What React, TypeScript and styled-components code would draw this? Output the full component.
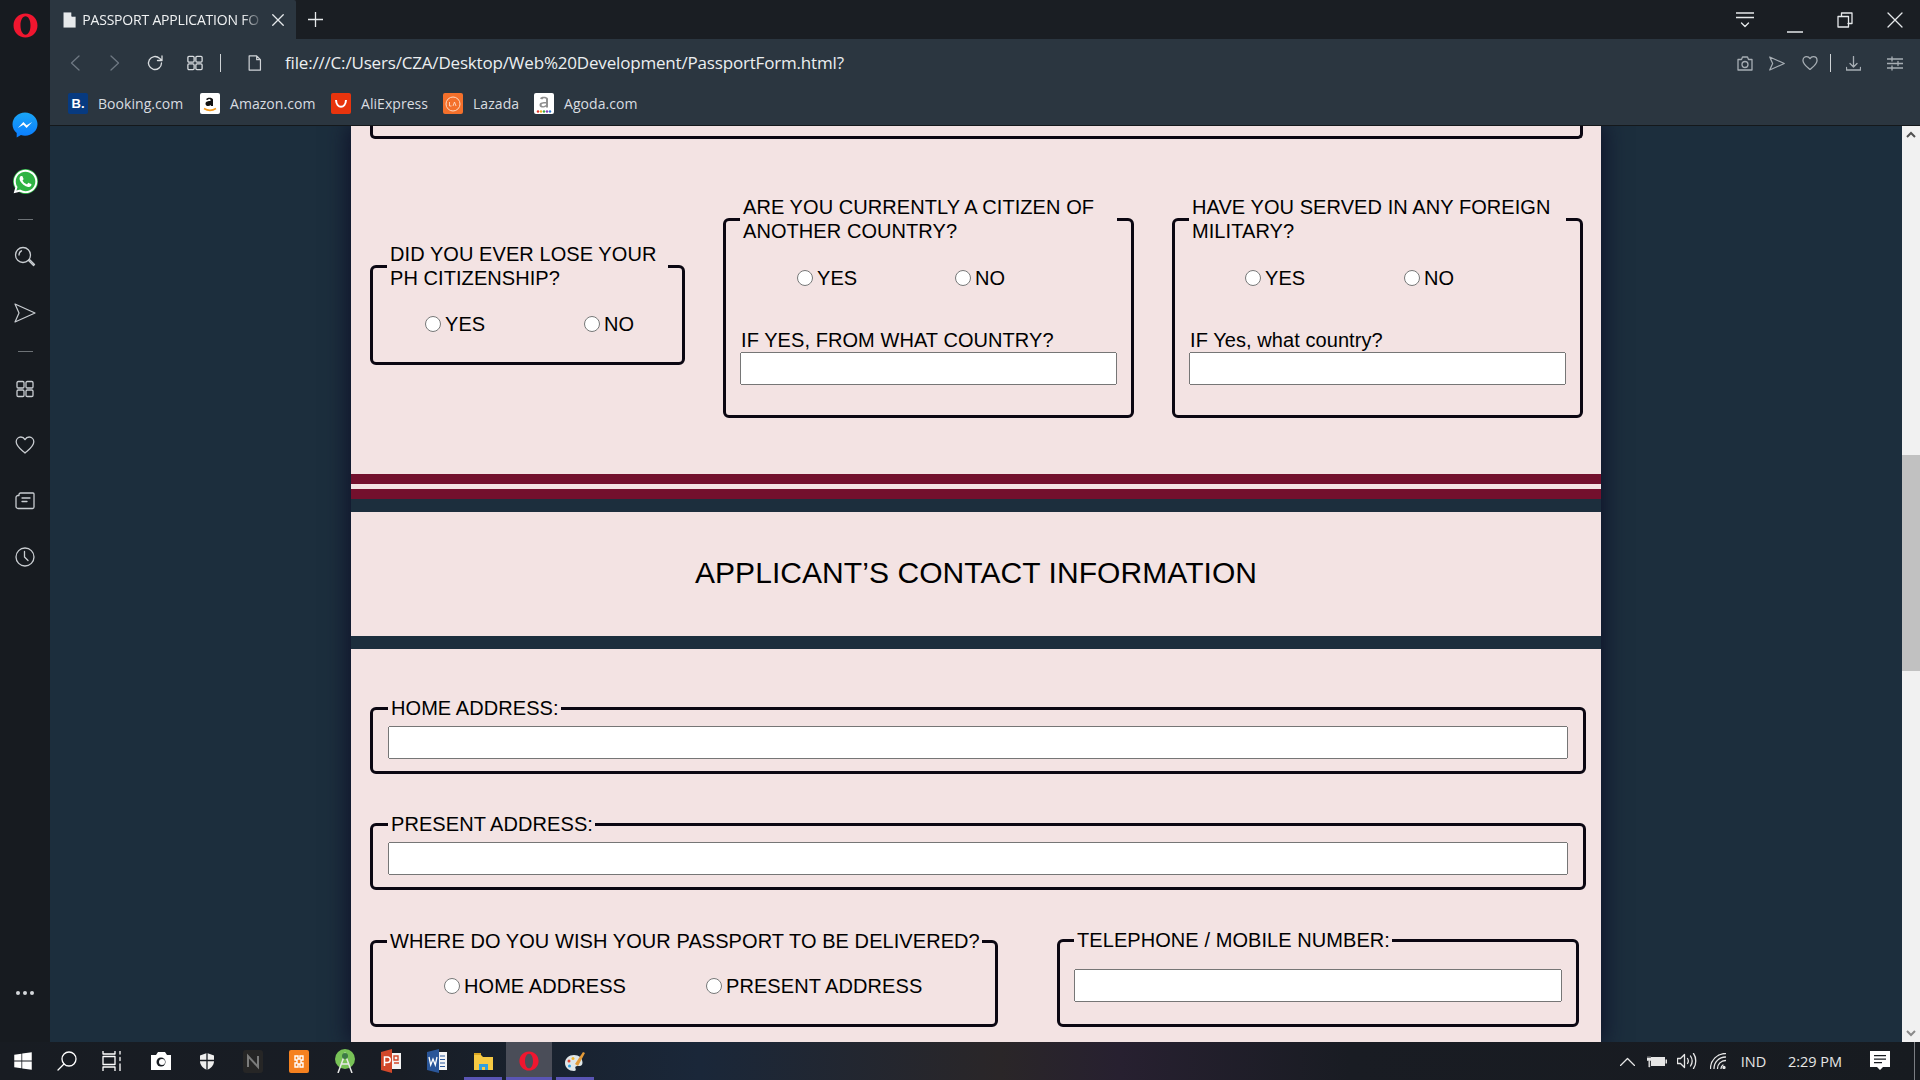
import React from "react";
import styled, { createGlobalStyle } from "styled-components";
import { FaWindows, FaWhatsapp } from "react-icons/fa";

const GlobalStyle = createGlobalStyle`
  html, body { margin: 0; padding: 0; height: 100%; overflow: hidden; background: #171b20; }
  * { box-sizing: border-box; }
`;

const Screen = styled.div`
  width: 1920px;
  height: 1080px;
  display: grid;
  grid-template-columns: 50px 1fr;
  grid-template-rows: 1fr 38px;
  overflow: hidden;
  font-family: "Open Sans", "Noto Sans", sans-serif;
`;

/* ---------- sidebar ---------- */
const Rail = styled.aside`
  background: #171b20;
  display: flex;
  flex-direction: column;
  align-items: center;
  padding-bottom: 47px;
  color: #c9cdd1;
`;
const RailLogo = styled.div`
  height: 50px;
  margin-bottom: 47px;
  display: flex;
  align-items: center;
  justify-content: center;
`;
const RailItem = styled.div`
  height: 56px;
  width: 50px;
  display: flex;
  align-items: center;
  justify-content: center;
`;
const RailSep = styled.div`
  height: 20px;
  display: flex;
  align-items: center;
  &::before {
    content: "";
    width: 15px;
    height: 1px;
    background: #6d7276;
  }
`;
const RailDots = styled.div`
  margin-top: auto;
  display: flex;
  gap: 3px;
  height: 4px;
  i {
    width: 4px;
    height: 4px;
    border-radius: 50%;
    background: #d4d7da;
  }
`;
const WhatsBadge = styled.div`
  width: 25px;
  height: 25px;
  border-radius: 50%;
  background: #2fb344;
  color: #fff;
  display: flex;
  align-items: center;
  justify-content: center;
  font-size: 27px;
`;

/* ---------- browser chrome ---------- */
const Browser = styled.div`
  display: flex;
  flex-direction: column;
  min-width: 0;
  min-height: 0;
`;
const TabStrip = styled.div`
  height: 39px;
  flex: none;
  display: flex;
  background: #1a1e23;
  color: #e6e9eb;
`;
const Tab = styled.div`
  width: 246px;
  background: #2b3640;
  display: flex;
  align-items: center;
  padding: 0 9px 0 12px;
  border-top-right-radius: 2px;
`;
const TabTitle = styled.div`
  width: 182px;
  margin-left: 5px;
  font-size: 14px;
  letter-spacing: -0.2px;
  white-space: nowrap;
  color: #f0f2f3;
  mask-image: linear-gradient(to right, #000 88%, transparent 100%);
`;
const TabClose = styled.div`
  width: 18px;
  margin-left: auto;
  display: flex;
  justify-content: center;
`;
const NewTab = styled.div`
  width: 38px;
  display: flex;
  align-items: center;
  justify-content: center;
`;
const WindowControls = styled.div`
  margin-left: auto;
  display: flex;
`;
const WindowButton = styled.div`
  width: 50px;
  display: flex;
  align-items: center;
  justify-content: center;
`;
const Toolbar = styled.div`
  height: 48px;
  flex: none;
  background: #2b3640;
  display: flex;
  align-items: center;
  padding-left: 5px;
  color: #c9ced2;
`;
const NavButton = styled.div<{ $dim?: boolean }>`
  width: 40px;
  display: flex;
  justify-content: center;
  color: ${(p) => (p.$dim ? "#6e7882" : "#d8dcdf")};
`;
const Divider = styled.div<{ $left?: number }>`
  width: 1px;
  height: 18px;
  margin-left: ${(p) => p.$left ?? 0}px;
  background: #cfd3d6;
`;
const PageIconSlot = styled.div`
  width: 60px;
  display: flex;
  justify-content: center;
  margin-left: 4px;
  color: #d0d4d7;
`;
const UrlText = styled.div`
  font-size: 17px;
  letter-spacing: -0.18px;
  padding-bottom: 2px;
  color: #eceff1;
`;
const ToolActions = styled.div`
  margin-left: auto;
  display: flex;
  align-items: center;
  padding-right: 4px;
  color: #a7aeb4;
`;
const ToolButton = styled.div<{ $w: number }>`
  width: ${(p) => p.$w}px;
  display: flex;
  justify-content: center;
  align-items: center;
`;
const Bookmarks = styled.div`
  height: 39px;
  flex: none;
  background: #2b3640;
  border-bottom: 1px solid #14181b;
  display: flex;
  align-items: center;
  padding: 0 0 5px 18px;
`;
const Bookmark = styled.div<{ $w: number }>`
  width: ${(p) => p.$w}px;
  display: flex;
  align-items: center;
  gap: 10px;
  font-size: 14px;
  letter-spacing: 0.05px;
  color: #d9dde0;
`;
const BookmarkTile = styled.div<{ $bg: string }>`
  width: 20px;
  height: 21px;
  flex: none;
  border-radius: 2px;
  background: ${(p) => p.$bg};
  color: #fff;
  display: flex;
  align-items: center;
  justify-content: center;
  font-family: "Liberation Sans", sans-serif;
  font-weight: 700;
  font-size: 13px;
`;

/* ---------- page ---------- */
const Viewport = styled.div`
  flex: 1;
  min-height: 0;
  display: flex;
`;
const PageArea = styled.main`
  flex: 1;
  min-width: 0;
  background: #1c2e3d;
  padding-left: 301px;
  overflow: hidden;
`;
const FormSheet = styled.form`
  width: 1250px;
  min-height: 100%;
  background: #f3e3e3;
  box-shadow: 0 0 22px 2px #0e1028;
  color: #000;
  font-family: "Liberation Sans", Arial, sans-serif;
  font-size: 20px;
  line-height: 24px;
  letter-spacing: 0.07px;
`;
const PriorFieldEnd = styled.div`
  height: 13px;
  margin: 0 18px 0 19px;
  border: 3px solid #0b0712;
  border-top: 0;
  border-radius: 0 0 5px 5px;
`;
const CitizenRow = styled.div`
  display: flex;
  align-items: flex-start;
  gap: 38px;
  padding-left: 19px;
  margin-top: 56px;
  height: 223px;
`;
const Field = styled.fieldset<{ $w: number; $top?: number; $bottom?: number; $side?: number }>`
  width: ${(p) => p.$w}px;
  flex: none;
  margin: ${(p) => p.$top ?? 0}px 0 0;
  padding: 0 ${(p) => p.$side ?? 14}px ${(p) => p.$bottom ?? 26}px;
  border: 3px solid #0b0712;
  border-radius: 6px;
  min-width: 0;
`;
const FieldLegend = styled.legend<{ $single?: boolean }>`
  padding: 0 2px 0 3px;
  white-space: ${(p) => (p.$single ? "nowrap" : "normal")};
`;
const RadioRow = styled.div<{ $indent: number; $top: number }>`
  display: flex;
  padding-left: ${(p) => p.$indent}px;
  margin-top: ${(p) => p.$top}px;
  height: 24px;
`;
const RadioOption = styled.label<{ $step: number }>`
  width: ${(p) => p.$step}px;
  display: flex;
  align-items: center;
  gap: 4px;
`;
const Radio = styled.input.attrs({ type: "radio" })`
  width: 16px;
  height: 16px;
  margin: 0;
`;
const FieldLabel = styled.label`
  display: block;
  margin-top: 38px;
  padding-left: 1px;
`;
const TextBox = styled.input.attrs({ type: "text" })<{ $top?: number }>`
  display: block;
  width: 100%;
  height: 33px;
  margin-top: ${(p) => p.$top ?? 0}px;
`;
const MaroonStripe = styled.div`
  height: 10px;
  background: #73102d;
`;
const StripeGroup = styled.div`
  margin-top: 56px;
  display: flex;
  flex-direction: column;
  gap: 5px;
`;
const NavyStripe = styled.div`
  height: 13px;
  background: #1c2e3d;
`;
const SectionTitle = styled.h2`
  height: 124px;
  margin: 0;
  padding-bottom: 2px;
  display: flex;
  align-items: center;
  justify-content: center;
  font-size: 30px;
  font-weight: 400;
`;
const AddressStack = styled.div`
  padding: 47px 0 0 19px;
  display: flex;
  flex-direction: column;
  gap: 38px;
`;
const DeliveryRow = styled.div`
  display: flex;
  align-items: flex-end;
  gap: 59px;
  padding: 38px 0 0 19px;
`;

/* ---------- scrollbar ---------- */
const Scrollbar = styled.div`
  width: 18px;
  flex: none;
  background: #f1f1f1;
  display: flex;
  flex-direction: column;
  align-items: center;
  color: #505050;
`;
const ScrollArrow = styled.div`
  height: 17px;
  width: 100%;
  display: flex;
  align-items: center;
  justify-content: center;
`;
const ScrollThumb = styled.div`
  width: 100%;
  height: 216px;
  margin-top: 312px;
  margin-bottom: auto;
  background: #c1c1c1;
`;

/* ---------- taskbar ---------- */
const Taskbar = styled.footer`
  grid-column: 1 / -1;
  display: flex;
  align-items: stretch;
  background: linear-gradient(
    to right,
    #181c22 0,
    #181d25 400px,
    #1a2739 700px,
    #2a2628 1000px,
    #272030 1120px,
    #191c23 1350px,
    #171b20 100%
  );
`;
const TaskItem = styled.div<{ $open?: boolean; $active?: boolean; $nudge?: number }>`
  width: 46px;
  padding-right: ${(p) => p.$nudge ?? 0}px;
  position: relative;
  display: flex;
  align-items: center;
  justify-content: center;
  color: #fff;
  background: ${(p) => (p.$active ? "#4a4d58" : "transparent")};
  &::after {
    content: "";
    display: ${(p) => (p.$open ? "block" : "none")};
    position: absolute;
    left: ${(p) => (p.$active ? 0 : 4)}px;
    right: ${(p) => (p.$active ? 0 : 4)}px;
    bottom: 0;
    height: 3px;
    background: #5a55b4;
  }
`;
const Tray = styled.div`
  margin-left: auto;
  display: flex;
  align-items: center;
  color: #e6e6e6;
  font-size: 14.5px;
`;
const TrayIcon = styled.div<{ $w: number }>`
  width: ${(p) => p.$w}px;
  display: flex;
  justify-content: center;
`;
const TrayText = styled.div<{ $w: number }>`
  width: ${(p) => p.$w}px;
  text-align: center;
  white-space: nowrap;
`;
const TrayEdge = styled.div`
  width: 1px;
  margin-left: 11px;
  margin-right: 5px;
  background: #7b7e83;
  align-self: stretch;
`;

/* ---------- drawings ---------- */
const Ico = styled.svg`
  display: block;
  fill: none;
  stroke: currentColor;
  stroke-width: 1.3;
  stroke-linecap: round;
  stroke-linejoin: round;
  * {
    vector-effect: non-scaling-stroke;
  }
`;

const OperaLogo = ({ size = 25 }: { size?: number }) => (
  <svg width={size} height={size} viewBox="0 0 24 24">
    <path
      fillRule="evenodd"
      fill="#f0162f"
      d="M12 0.5C5.4 0.5 0.5 5.6 0.5 12S5.4 23.5 12 23.5 23.5 18.4 23.5 12 18.6 0.5 12 0.5zM12 3.2c2.9 0 4.8 3.9 4.8 8.8s-1.9 8.8-4.8 8.8-4.8-3.9-4.8-8.8 1.9-8.8 4.8-8.8z"
    />
  </svg>
);
const MessengerIcon = () => (
  <svg width="26" height="26" viewBox="0 0 26 26">
    <defs>
      <linearGradient id="msg" x1="0" y1="1" x2="0" y2="0">
        <stop offset="0" stopColor="#0a7cff" />
        <stop offset="1" stopColor="#1aa5f5" />
      </linearGradient>
    </defs>
    <path fill="url(#msg)" d="M13 0.5C6 .5.5 5.6.5 12.3c0 3.6 1.6 6.6 4.2 8.7v4.5l4.2-2.4c1.3.4 2.7.6 4.1.6 7 0 12.5-5.1 12.5-11.4S20 .5 13 .5z" />
    <path fill="#fff" d="M5.8 16l5.6-6 3.2 3.2L20.2 9.9l-5.6 6-3.2-3.2z" />
  </svg>
);
const PlainDoc = ({ size = 16, filled = false }: { size?: number; filled?: boolean }) => (
  <Ico width={size * 0.85} height={size} viewBox="0 0 14 17">
    <path
      d="M1 1h8l4 4v11H1z M9 1v4h4"
      fill={filled ? "#e6e9eb" : "none"}
      stroke={filled ? "#2b3640" : "currentColor"}
      strokeWidth={filled ? 0.8 : 1.2}
    />
  </Ico>
);
const CloseX = ({ size }: { size: number }) => (
  <Ico width={size} height={size} viewBox="0 0 16 16" strokeLinecap="butt">
    <path d="M1 1l14 14M15 1L1 15" />
  </Ico>
);
const SendIcon = ({ w, h }: { w: number; h: number }) => (
  <Ico width={w} height={h} viewBox="0 0 22 20">
    <path d="M1 1l20 9-20 9 4-9z" strokeWidth="1.2" />
  </Ico>
);
const HeartIcon = ({ size }: { size: number }) => (
  <Ico width={size} height={size} viewBox="0 0 20 20">
    <path d="M10 18C6 14.6 1.2 11.5 1.2 6.8 1.2 4 3.3 2 5.8 2 7.600 2 9.100 3 10 4.600 10.900 3 12.400 2 14.200 2c2.500 0 4.600 2 4.600 4.800C18.800 11.500 14 14.600 10 18z" />
  </Ico>
);
const GridIcon = ({ size }: { size: number }) => (
  <Ico width={size} height={size} viewBox="0 0 18 18">
    <rect x="1" y="1.500" width="7" height="6.500" rx="1.200" />
    <rect x="10" y="1.500" width="7" height="6.500" rx="1.200" />
    <rect x="1" y="10" width="7" height="6.500" rx="1.200" />
    <rect x="10" y="10" width="7" height="6.500" rx="1.200" />
  </Ico>
);

const LINK = "file:///C:/Users/CZA/Desktop/Web%20Development/PassportForm.html?";

export default function App() {
  return (
    <>
      <GlobalStyle />
      <Screen>
        <Rail>
          <RailLogo>
            <OperaLogo />
          </RailLogo>
          <RailItem>
            <MessengerIcon />
          </RailItem>
          <RailItem>
            <WhatsBadge>
              <FaWhatsapp />
            </WhatsBadge>
          </RailItem>
          <RailSep />
          <RailItem>
            <Ico width="22" height="22" viewBox="0 0 22 22">
              <circle cx="9" cy="9" r="7.500" />
              <path d="M14.500 14.500l5 5 1-1-5-5M5 9c0-2 1-3.500 2.500-4.200" />
            </Ico>
          </RailItem>
          <RailItem>
            <SendIcon w={22} h={20} />
          </RailItem>
          <RailSep />
          <RailItem>
            <GridIcon size={18} />
          </RailItem>
          <RailItem>
            <HeartIcon size={20} />
          </RailItem>
          <RailItem>
            <Ico width="20" height="18" viewBox="0 0 20 18">
              <path d="M4 3.500V2.500A1.500 1.500 0 0 1 5.500 1H18a1 1 0 0 1 1 1v13a1.500 1.500 0 0 1-1.500 1.500H3A2 2 0 0 1 1 14.500V5.500A2 2 0 0 1 3 3.500h1zM7 6h8M7 9.500h5" />
            </Ico>
          </RailItem>
          <RailItem>
            <Ico width="20" height="20" viewBox="0 0 20 20">
              <circle cx="10" cy="10" r="9" />
              <path d="M9.500 4.500v5.500l3.500 3.500" />
            </Ico>
          </RailItem>
          <RailDots>
            <i />
            <i />
            <i />
          </RailDots>
        </Rail>

        <Browser>
          <TabStrip>
            <Tab>
              <PlainDoc size={18} filled />
              <TabTitle>PASSPORT APPLICATION FO</TabTitle>
              <TabClose>
                <CloseX size={12} />
              </TabClose>
            </Tab>
            <NewTab>
              <Ico width="15" height="15" viewBox="0 0 15 15" strokeLinecap="butt">
                <path d="M7.500 0v15M0 7.500h15" />
              </Ico>
            </NewTab>
            <WindowControls>
              <WindowButton>
                <Ico width="18" height="16" viewBox="0 0 18 16" strokeLinecap="butt">
                  <path d="M0 1h18M0 5.500h18M5.500 11l3.500 3.500 3.500-3.500" />
                </Ico>
              </WindowButton>
              <WindowButton>
                <Ico width="16" height="14" viewBox="0 0 16 14" strokeLinecap="butt" style={{ marginTop: 12 }}>
                  <path d="M0 13h16" />
                </Ico>
              </WindowButton>
              <WindowButton>
                <Ico width="16" height="16" viewBox="0 0 16 16">
                  <path d="M4.500 4.500V1h10.500v10.500h-4M1 4.500h10.500V15H1z" />
                </Ico>
              </WindowButton>
              <WindowButton>
                <CloseX size={16} />
              </WindowButton>
            </WindowControls>
          </TabStrip>

          <Toolbar>
            <NavButton $dim>
              <Ico width="10" height="16" viewBox="0 0 10 16">
                <path d="M9 1L1.500 8 9 15" />
              </Ico>
            </NavButton>
            <NavButton $dim>
              <Ico width="10" height="16" viewBox="0 0 10 16">
                <path d="M1 1l7.500 7L1 15" />
              </Ico>
            </NavButton>
            <NavButton>
              <Ico width="16" height="16" viewBox="0 0 16 16">
                <path d="M14.500 8a6.500 6.500 0 1 1-2-4.700L15 5.500M15 1v4.500h-4.500" />
              </Ico>
            </NavButton>
            <NavButton>
              <GridIcon size={16} />
            </NavButton>
            <Divider $left={5} />
            <PageIconSlot>
              <PlainDoc size={16} />
            </PageIconSlot>
            <UrlText>{LINK}</UrlText>
            <ToolActions>
              <ToolButton $w={33}>
                <Ico width="16" height="15" viewBox="0 0 16 15">
                  <path d="M1 3.500h3.500l1-2.500h5l1 2.500H15V14H1z" />
                  <circle cx="8" cy="8.500" r="3" />
                </Ico>
              </ToolButton>
              <ToolButton $w={32}>
                <SendIcon w={16} h={15} />
              </ToolButton>
              <ToolButton $w={33}>
                <HeartIcon size={16} />
              </ToolButton>
              <ToolButton $w={8}>
                <Divider />
              </ToolButton>
              <ToolButton $w={39}>
                <Ico width="15" height="15" viewBox="0 0 15 15">
                  <path d="M7.500 0.500v10M4 7.500l3.500 3.500L11 7.500M0.500 11.500v2.500h14v-2.500" />
                </Ico>
              </ToolButton>
              <ToolButton $w={43}>
                <Ico width="16" height="15" viewBox="0 0 16 15" strokeLinecap="butt">
                  <path d="M0 3h16M0 7.500h16M0 12h16M5 1v4M11 5.500v4M5 10v4" />
                </Ico>
              </ToolButton>
            </ToolActions>
          </Toolbar>

          <Bookmarks>
            <Bookmark $w={132}>
              <BookmarkTile $bg="#073a80">B.</BookmarkTile>
              Booking.com
            </Bookmark>
            <Bookmark $w={131}>
              <BookmarkTile $bg="#fff">
                <svg width="16" height="19" viewBox="0 0 16 19">
                  <path d="M4 5.500c.5-2.500 6.500-2.500 7 0v6.500h-2l-.2-1c-1.800 1.800-5.300 1.300-5.300-1.300 0-2.500 3-2.800 5-2.800V5.800c-.5-1-2.200-1-2.700.2z" fill="#111" />
                  <path d="M2 14.500c4 2.500 8 2.500 12 0" fill="none" stroke="#f39a1d" strokeWidth="1.500" />
                </svg>
              </BookmarkTile>
              Amazon.com
            </Bookmark>
            <Bookmark $w={112}>
              <BookmarkTile $bg="#e8340d">
                <svg width="14" height="10" viewBox="0 0 14 10">
                  <path d="M2 1c.5 9 9.500 9 10 0" fill="none" stroke="#fff" strokeWidth="2" />
                </svg>
              </BookmarkTile>
              AliExpress
            </Bookmark>
            <Bookmark $w={91}>
              <BookmarkTile $bg="#f4702b">
                <svg width="18" height="18" viewBox="0 0 18 18">
                  <circle cx="9" cy="9" r="7" fill="none" stroke="#ffd9c2" strokeWidth="1" />
                  <path d="M5.500 7v4h2M9 11l1.500-4 1.500 4" fill="none" stroke="#ffe7d8" strokeWidth=".8" />
                </svg>
              </BookmarkTile>
              Lazada
            </Bookmark>
            <Bookmark $w={120}>
              <BookmarkTile $bg="#fff">
                <svg width="18" height="20" viewBox="0 0 18 20">
                  <path d="M5 4.500c.5-2.500 7-2.500 8 0v9h-2v-1c-2 1.800-6.500 1.500-6.500-1.500 0-3 4-3 6.500-3V5c-.5-1-3-1-3.800.5zM11 9.500c-2 0-4.500 0-4.500 1.500s3 1.500 4.500 0z" fill="#8f8f8f" fillRule="evenodd" />
                  <circle cx="3" cy="17.500" r="1.200" fill="#e0342b" />
                  <circle cx="6" cy="17.500" r="1.200" fill="#f2b01e" />
                  <circle cx="9" cy="17.500" r="1.200" fill="#3aa648" />
                  <circle cx="12" cy="17.500" r="1.200" fill="#8b3fb5" />
                  <circle cx="15" cy="17.500" r="1.200" fill="#2e7ccf" />
                </svg>
              </BookmarkTile>
              Agoda.com
            </Bookmark>
          </Bookmarks>

          <Viewport>
            <PageArea>
              <FormSheet>
                <PriorFieldEnd />
                <CitizenRow>
                  <Field $w={315} $top={47}>
                    <FieldLegend>DID YOU EVER LOSE YOUR PH CITIZENSHIP?</FieldLegend>
                    <RadioRow $indent={38} $top={22}>
                      <RadioOption $step={159}>
                        <Radio name="lost" />
                        YES
                      </RadioOption>
                      <RadioOption $step={70}>
                        <Radio name="lost" />
                        NO
                      </RadioOption>
                    </RadioRow>
                  </Field>
                  <Field $w={411} $bottom={30}>
                    <FieldLegend>ARE YOU CURRENTLY A CITIZEN OF ANOTHER COUNTRY?</FieldLegend>
                    <RadioRow $indent={57} $top={23}>
                      <RadioOption $step={158}>
                        <Radio name="citizen" />
                        YES
                      </RadioOption>
                      <RadioOption $step={70}>
                        <Radio name="citizen" />
                        NO
                      </RadioOption>
                    </RadioRow>
                    <FieldLabel>IF YES, FROM WHAT COUNTRY?</FieldLabel>
                    <TextBox />
                  </Field>
                  <Field $w={411} $bottom={30}>
                    <FieldLegend>HAVE YOU SERVED IN ANY FOREIGN MILITARY?</FieldLegend>
                    <RadioRow $indent={56} $top={23}>
                      <RadioOption $step={159}>
                        <Radio name="military" />
                        YES
                      </RadioOption>
                      <RadioOption $step={70}>
                        <Radio name="military" />
                        NO
                      </RadioOption>
                    </RadioRow>
                    <FieldLabel>IF Yes, what country?</FieldLabel>
                    <TextBox />
                  </Field>
                </CitizenRow>

                <StripeGroup>
                  <MaroonStripe />
                  <MaroonStripe />
                </StripeGroup>
                <NavyStripe />
                <SectionTitle>APPLICANT’S CONTACT INFORMATION</SectionTitle>
                <NavyStripe />

                <AddressStack>
                  <Field $w={1216} $bottom={12} $side={15}>
                    <FieldLegend>HOME ADDRESS:</FieldLegend>
                    <TextBox $top={6} />
                  </Field>
                  <Field $w={1216} $bottom={12} $side={15}>
                    <FieldLegend>PRESENT ADDRESS:</FieldLegend>
                    <TextBox $top={6} />
                  </Field>
                </AddressStack>

                <DeliveryRow>
                  <Field $w={628}>
                    <FieldLegend $single>WHERE DO YOU WISH YOUR PASSPORT TO BE DELIVERED?</FieldLegend>
                    <RadioRow $indent={57} $top={21}>
                      <RadioOption $step={262}>
                        <Radio name="delivery" />
                        HOME ADDRESS
                      </RadioOption>
                      <RadioOption $step={220}>
                        <Radio name="delivery" />
                        PRESENT ADDRESS
                      </RadioOption>
                    </RadioRow>
                  </Field>
                  <Field $w={522} $bottom={22}>
                    <FieldLegend>TELEPHONE / MOBILE NUMBER:</FieldLegend>
                    <TextBox $top={17} />
                  </Field>
                </DeliveryRow>
              </FormSheet>
            </PageArea>
            <Scrollbar>
              <ScrollArrow>
                <svg width="10" height="7" viewBox="0 0 10 7">
                  <path d="M1 6l4-4 4 4" fill="none" stroke="currentColor" strokeWidth="2" />
                </svg>
              </ScrollArrow>
              <ScrollThumb />
              <ScrollArrow>
                <svg width="10" height="7" viewBox="0 0 10 7">
                  <path d="M1 1l4 4 4-4" fill="none" stroke="#8a8a8a" strokeWidth="2" />
                </svg>
              </ScrollArrow>
            </Scrollbar>
          </Viewport>
        </Browser>

        <Taskbar>
          <TaskItem>
            <FaWindows size={20} />
          </TaskItem>
          <TaskItem $nudge={4}>
            <Ico width="20" height="20" viewBox="0 0 20 20">
              <circle cx="12" cy="8" r="7" />
              <path d="M7 13l-6 6" />
            </Ico>
          </TaskItem>
          <TaskItem $nudge={4}>
            <Ico width="22" height="20" viewBox="0 0 22 20" strokeLinecap="butt">
              <path d="M1 0v3h12V0M1 5.500h12v8H1zM1 20v-4h12v4M18 0v3M18 6.500v3M18 13v7" />
            </Ico>
          </TaskItem>
          <TaskItem>
            <svg width="20" height="18" viewBox="0 0 20 18">
              <path fill="#fff" d="M0 3h5l2-3h7l2 3h4v15H0z" />
              <circle cx="10" cy="10" r="4.500" fill="#181c22" />
              <circle cx="11" cy="10" r="3" fill="#fff" />
            </svg>
          </TaskItem>
          <TaskItem>
            <svg width="14" height="17" viewBox="0 0 14 17">
              <path fill="#eee" d="M7 0l7 2.500V8c0 4-3 7.500-7 9-4-1.500-7-5-7-9V2.500z" />
              <path stroke="#181c22" strokeWidth="1.300" d="M7 0v17M0 7.500h14" />
            </svg>
          </TaskItem>
          <TaskItem>
            <svg width="20" height="23" viewBox="0 0 20 23">
              <rect width="20" height="23" rx="3" fill="#262626" />
              <path d="M5 17V6l10 11V6" fill="none" stroke="#7a7b7b" strokeWidth="2" />
            </svg>
          </TaskItem>
          <TaskItem>
            <svg width="20" height="23" viewBox="0 0 20 23">
              <rect width="20" height="23" rx="2" fill="#f5811f" />
              <path d="M6 6h3v3h2V6h3v4h-2v3h2v4h-3v-3H9v3H6v-4h2v-3H6z" fill="none" stroke="#fff" strokeWidth="1.400" />
            </svg>
          </TaskItem>
          <TaskItem>
            <svg width="20" height="24" viewBox="0 0 20 24">
              <circle cx="10" cy="10" r="10" fill="#78c257" />
              <path d="M3 24L10 5l7 19M6 15h8" fill="none" stroke="#e8e8e8" strokeWidth="1.500" />
              <circle cx="10" cy="7" r="3" fill="#3d7a46" />
            </svg>
          </TaskItem>
          <TaskItem>
            <svg width="20" height="24" viewBox="0 0 20 24">
              <rect x="8" y="4" width="12" height="16" fill="#f4f4f4" />
              <path d="M0 3l11-3v24L0 21z" fill="#d2482a" />
              <path d="M3.500 17V8h3a2.500 2.500 0 0 1 0 5.500h-3" fill="none" stroke="#fff" strokeWidth="1.500" />
              <path d="M13 7h4v4h-4zM13 14h5" stroke="#d2482a" strokeWidth="1.400" fill="none" />
            </svg>
          </TaskItem>
          <TaskItem>
            <svg width="20" height="24" viewBox="0 0 20 24">
              <rect x="8" y="3" width="12" height="18" fill="#f4f4f4" />
              <path d="M0 3l12-3v24L0 21z" fill="#2a5699" />
              <path d="M2 8l1.700 8 2.300-6 2.300 6L10 8" fill="none" stroke="#fff" strokeWidth="1.300" />
              <path d="M13 7h5M13 10.500h5M13 14h5M13 17.500h5" stroke="#2a5699" strokeWidth="1.200" />
            </svg>
          </TaskItem>
          <TaskItem $open>
            <svg width="19" height="17" viewBox="0 0 19 17">
              <path d="M0 2h7l2 2h10v13H0z" fill="#f6c944" />
              <path d="M0 0h7v2H0z" fill="#d9a520" />
              <path d="M5 17v-6h9v6h-3v-3H8v3z" fill="#2f9fe0" />
            </svg>
          </TaskItem>
          <TaskItem $open $active>
            <OperaLogo size={20} />
          </TaskItem>
          <TaskItem $open>
            <svg width="21" height="21" viewBox="0 0 21 21">
              <path d="M9 4C4 4 0 7.500 0 12s4 8 9 8c2 0 2-1.500 1.500-2.500-.6-1.300 0-2.500 2-2.500h2c2 0 3-1.500 3-3.500C17.500 7 14 4 9 4z" fill="#dfe6e8" />
              <circle cx="4" cy="10" r="1.500" fill="#e2452f" />
              <circle cx="8" cy="7.500" r="1.500" fill="#f3b52d" />
              <circle cx="4.500" cy="15" r="1.500" fill="#2f9fe0" />
              <path d="M10 13L18 1l2 1-7 13z" fill="#e39a38" />
            </svg>
          </TaskItem>

          <Tray>
            <TrayIcon $w={30}>
              <Ico width="15" height="9" viewBox="0 0 15 9" strokeLinecap="butt">
                <path d="M0.500 8.500l7-7 7 7" />
              </Ico>
            </TrayIcon>
            <TrayIcon $w={30}>
              <svg width="20" height="13" viewBox="0 0 20 13">
                <path d="M1 1v2M3 1v2M0 3h4v2.500H2.800V12H1.800V5.500H0z" fill="#e6e6e6" stroke="#e6e6e6" strokeWidth=".5" />
                <rect x="4" y="2" width="14" height="9" fill="#e6e6e6" />
                <rect x="18.500" y="4.500" width="1.500" height="4" fill="#e6e6e6" />
              </svg>
            </TrayIcon>
            <TrayIcon $w={30}>
              <Ico width="20" height="16" viewBox="0 0 20 16" strokeLinecap="butt">
                <path d="M0.500 5.500h3l4-4v13l-4-4h-3zM10.500 5.500c1 1.500 1 3.500 0 5M13.500 3c2 3 2 7 0 10M16.500 0.500c3 4 3 11 0 15" />
              </Ico>
            </TrayIcon>
            <TrayIcon $w={31}>
              <Ico width="16" height="16" viewBox="0 0 16 16" strokeLinecap="butt">
                <path d="M0.500 15.500A15 15 0 0 1 15.500 0.500M4 15.500A11.500 11.500 0 0 1 15.500 4M7.500 15.500a8 8 0 0 1 8-8M11 15.500a4.500 4.500 0 0 1 2-3.500" />
                <circle cx="14" cy="14.500" r="1" fill="currentColor" />
              </Ico>
            </TrayIcon>
            <TrayText $w={41}>IND</TrayText>
            <TrayText $w={82}>2:29 PM</TrayText>
            <TrayIcon $w={47}>
              <svg width="20" height="20" viewBox="0 0 20 20">
                <path fillRule="evenodd" fill="#fff" d="M0 0h20v16h-7l-3 3-3-3H0zM4 4v1.300h12V4zM4 7.500v1.300h12V7.500zM4 11v1.300h8V11z" />
              </svg>
            </TrayIcon>
            <TrayEdge />
          </Tray>
        </Taskbar>
      </Screen>
    </>
  );
}
